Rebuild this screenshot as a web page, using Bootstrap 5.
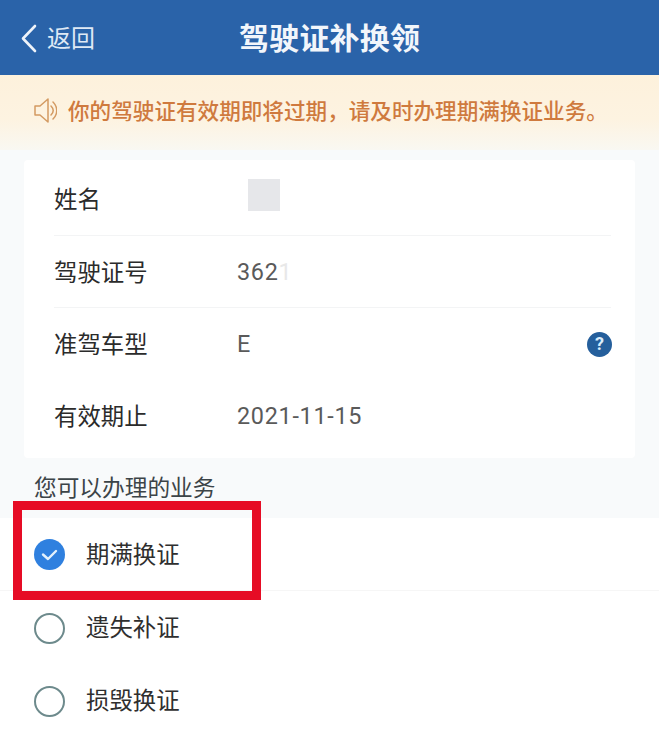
<!DOCTYPE html>
<html lang="zh">
<head>
<meta charset="utf-8">
<title>驾驶证补换领</title>
<link rel="stylesheet" href="https://cdn.jsdelivr.net/npm/bootstrap@5.3.0/dist/css/bootstrap.min.css">
<style>
html,body{height:739px;overflow:hidden}
body{background:#f8fafb;font-family:"Roboto","Noto Sans CJK SC",sans-serif;color:#333;position:relative}
.app-head{height:75px;background:#2a63a9;color:#f2f6fb;padding:2px 20px 0}
.back-link{font-size:24px;gap:10px;width:219px;color:#dfe9f5}
.head-title{font-size:30px;font-weight:700;line-height:1;letter-spacing:.2px}
.notice-bar{height:75px;background:linear-gradient(#fdf1dc 0,#fdf3e1 60%,#f9f8f2 100%);padding:0 0 0 34px;gap:11px;color:#cf7a3e;font-size:21.6px;font-weight:500}
.info-box{margin:10px 24px 0 24px;height:298px;background:#fff;padding:0 24px 0 30px}
.info-row{height:72px;border-bottom:1px solid #f3f4f5;font-size:23.4px;color:#2b2b2b;padding-top:4px}
.info-row:last-child,.info-row.no-rule{border-bottom:0}
.first-row{height:76px;padding-top:6px}
.info-label{width:183px;flex:none}
.info-val{color:#5a5a5a;font-size:23.4px;letter-spacing:.7px;margin-top:-2px}
.fade-digit{color:#e8e8e8}
.mask-block{width:32px;height:32px;background:#e6e7ea;margin:-12px 0 0 11px}
.help-dot{width:25px;height:25px;background:#255f9c;color:#d9ecfb;font-size:18px;font-weight:700;line-height:1;margin:-4px -1px 0 0}
.sect-title{font-size:22.7px;color:#3c4448;height:60px;padding:14px 0 0 34px;margin:0}
.opt-list{background:#fff;height:221px}
.opt-row{height:73px;padding-left:34px;gap:21px;font-size:23.4px;color:#2f2f2f;padding-top:1px}
.opt-row:first-child{border-bottom:1px solid #f6f6f6}
.opt-text{padding-top:2px}
.radio-off{width:31px;height:31px;border:2px solid #6d8a8c;border-radius:50%;flex:none}
.radio-on{width:31px;height:31px;flex:none}
.red-frame{position:absolute;left:13px;top:501px;width:248px;height:99px;border:9.5px solid #e60c25;pointer-events:none}
</style>
</head>
<body>
<header class="app-head d-flex align-items-center">
  <div class="back-link d-flex align-items-center">
    <svg width="17" height="29" viewBox="0 0 17 29" fill="none" stroke="#eef3fa" stroke-width="2.6" stroke-linecap="round" stroke-linejoin="round"><path d="M15 2 3 14.5 15 27"/></svg>
    <span>返回</span>
  </div>
  <div class="head-title">驾驶证补换领</div>
</header>
<div class="notice-bar d-flex align-items-center">
  <svg width="23" height="27" viewBox="0 0 23 27" fill="none" stroke="#d39a62" stroke-width="1.5" stroke-linejoin="round" class="flex-shrink-0 mb-1"><path d="M1 9h5l8-7v23l-8-7H1z"/><path d="M17 9c3 3 3 6 0 9M19 5c5 5 5 12 0 17" stroke-linecap="round"/></svg>
  <span>你的驾驶证有效期即将过期，请及时办理期满换证业务。</span>
</div>
<main>
  <section class="info-box rounded-1">
    <div class="info-row first-row d-flex align-items-center"><span class="info-label">姓名</span><span class="mask-block"></span></div>
    <div class="info-row d-flex align-items-center"><span class="info-label">驾驶证号</span><span class="info-val">362<span class="fade-digit">1</span></span></div>
    <div class="info-row no-rule d-flex align-items-center"><span class="info-label">准驾车型</span><span class="info-val">E</span><span class="help-dot rounded-circle d-flex align-items-center justify-content-center ms-auto">?</span></div>
    <div class="info-row d-flex align-items-center"><span class="info-label">有效期止</span><span class="info-val">2021-11-15</span></div>
  </section>
  <p class="sect-title">您可以办理的业务</p>
  <div class="opt-list">
    <div class="opt-row d-flex align-items-center">
      <svg class="radio-on" viewBox="0 0 31 31"><circle cx="15.5" cy="15.5" r="15.5" fill="#2f80df"/><path d="M9 15.5l5 4.5 8-8" fill="none" stroke="#e4f1fc" stroke-width="2.4" stroke-linecap="round" stroke-linejoin="round"/></svg>
      <span class="opt-text">期满换证</span>
    </div>
    <div class="opt-row d-flex align-items-center"><span class="radio-off"></span><span class="opt-text">遗失补证</span></div>
    <div class="opt-row d-flex align-items-center"><span class="radio-off"></span><span class="opt-text">损毁换证</span></div>
  </div>
</main>
<div class="red-frame"></div>
<script src="https://cdn.jsdelivr.net/npm/bootstrap@5.3.0/dist/js/bootstrap.bundle.min.js"></script>
</body>
</html>
